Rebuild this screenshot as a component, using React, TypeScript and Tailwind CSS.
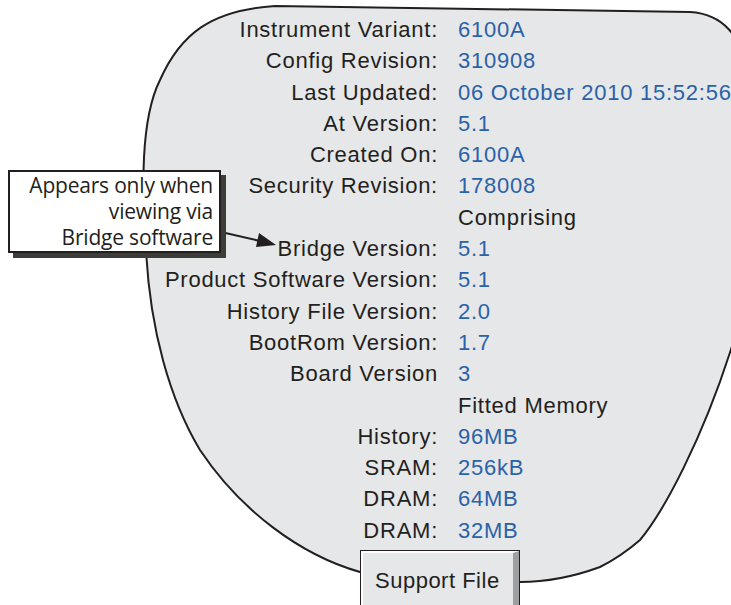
const rows: [string, string, boolean][] = [
  ['Instrument Variant:', '6100A', true],
  ['Config Revision:', '310908', true],
  ['Last Updated:', '06 October 2010 15:52:56', true],
  ['At Version:', '5.1', true],
  ['Created On:', '6100A', true],
  ['Security Revision:', '178008', true],
  ['', 'Comprising', false],
  ['Bridge Version:', '5.1', true],
  ['Product Software Version:', '5.1', true],
  ['History File Version:', '2.0', true],
  ['BootRom Version:', '1.7', true],
  ['Board Version', '3', true],
  ['', 'Fitted Memory', false],
  ['History:', '96MB', true],
  ['SRAM:', '256kB', true],
  ['DRAM:', '64MB', true],
  ['DRAM:', '32MB', true],
]

const Outline = () => (
  <svg className="absolute inset-0" width="731" height="605" viewBox="0 0 731 605">
    <path
      d="M 275 6 L 690 12 C 722 14 738 30 760 90 C 790 250 690 480 640 540 C 625 553 612 561 600 567 C 570 578 545 582 520 582 L 360 572 C 300 555 240 510 200 450 C 170 400 150 330 146 250 C 142 190 140 120 160 80 C 180 35 210 10 275 6 Z"
      fill="#e6e7e8"
      stroke="#231f20"
      strokeWidth="2"
    />
    <line x1="221" y1="232" x2="260" y2="241" stroke="#231f20" strokeWidth="2" />
    <polygon points="276,245 259,233 256,247" fill="#231f20" />
  </svg>
)

export default function App() {
  return (
    <div className="relative w-[731px] h-[605px] overflow-hidden bg-white font-['Liberation_Sans',Arial,sans-serif]">
      <Outline />

      <div className="relative pt-[14px]">
        <div className="grid grid-cols-[438px_1fr] gap-x-[20px] auto-rows-[31.3px] text-[22px] leading-[31.3px] tracking-[0.75px] whitespace-nowrap">
          {rows.map(([label, value, blue], i) => (
            <div key={i} className="contents">
              <div className="text-right text-[#231f20]">{label}</div>
              <div className={blue ? 'text-[#2a62a8]' : 'text-[#231f20]'}>{value}</div>
            </div>
          ))}
        </div>

        <div className="ml-[360px] mt-[4px] w-[160px] h-[70px] border border-[#231f20] bg-[#e6e7e8]">
          <div className="h-full border-t-2 border-l-2 border-white border-r-[6px] border-r-[#9d9fa2] pl-[12px] pt-[13px] text-[22px] leading-[30px] tracking-[0.5px] text-[#231f20]">
            Support File
          </div>
        </div>
      </div>

      <div className="absolute left-[8px] top-[170px] w-[213px] h-[83px] border-2 border-[#231f20] bg-white shadow-[5px_5px_0_#3c3c38] pr-[6px] text-right font-['Open_Sans',sans-serif] text-[21px] leading-[26px] tracking-[-0.2px] text-[#231f20]">
        Appears only when
        <br />
        viewing via
        <br />
        Bridge software
      </div>
    </div>
  )
}
